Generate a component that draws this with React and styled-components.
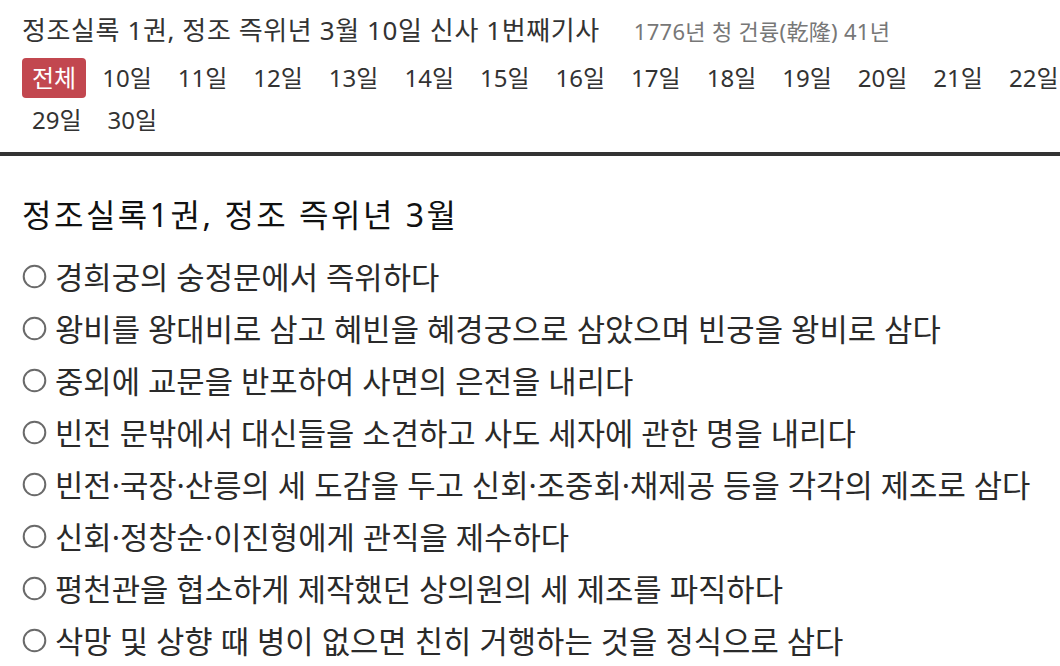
import React from 'react';
import styled, { createGlobalStyle } from 'styled-components';

const GlobalStyle = createGlobalStyle`
  html, body {
    margin: 0;
    padding: 0;
    background: #fff;
    overflow: hidden;
  }
  body {
    font-family: "Noto Sans", "Noto Sans CJK KR", sans-serif;
    color: #333;
  }
`;

const Page = styled.div`
  width: 1600px;
  padding-top: 10px;
`;

const Header = styled.div`
  display: flex;
  align-items: baseline;
  padding: 0 22px;
  height: 40px;
  line-height: 40px;
`;

const Title = styled.h1`
  margin: 0;
  font-size: 26px;
  font-weight: 400;
  letter-spacing: 0.6px;
  color: #333;
`;

const Era = styled.span`
  margin-left: 34px;
  font-size: 22px;
  letter-spacing: 0.3px;
  color: #777;
`;

const DayList = styled.ul`
  list-style: none;
  margin: 8px 0 0;
  padding: 0 22px;
  display: flex;
  flex-wrap: wrap;
  column-gap: 6px;
  row-gap: 2px;
`;

const DayItem = styled.li`
  height: 40px;
  line-height: 40px;
  padding: 0 10px;
  border-radius: 4px;
  font-size: 24px;
  background: ${(p) => (p.$active ? '#c2474f' : 'transparent')};
  color: ${(p) => (p.$active ? '#fff' : '#333')};
`;

const Divider = styled.hr`
  margin: 12px 0 0;
  border: 0;
  height: 4px;
  background: #333;
`;

const Section = styled.section`
  padding: 39px 22px 0;
`;

const SectionTitle = styled.h2`
  margin: 0 0 14px;
  font-size: 32px;
  font-weight: 400;
  letter-spacing: 2.5px;
  line-height: 40px;
  color: #111;
`;

const Articles = styled.ul`
  list-style: none;
  margin: 0;
  padding: 0;
`;

const Article = styled.li`
  display: flex;
  align-items: center;
  height: 52px;
  font-size: 30.8px;
  color: #2a2a2a;
`;

const Bullet = styled.svg`
  flex: none;
  width: 25px;
  height: 25px;
  margin-right: 8px;
  margin-top: 2px;
`;

const days = ['10', '11', '12', '13', '14', '15', '16', '17', '18', '19', '20', '21', '22', '23', '24', '25', '26', '27', '28', '29', '30'];

const articles = [
  '경희궁의 숭정문에서 즉위하다',
  '왕비를 왕대비로 삼고 혜빈을 혜경궁으로 삼았으며 빈궁을 왕비로 삼다',
  '중외에 교문을 반포하여 사면의 은전을 내리다',
  '빈전 문밖에서 대신들을 소견하고 사도 세자에 관한 명을 내리다',
  '빈전·국장·산릉의 세 도감을 두고 신회·조중회·채제공 등을 각각의 제조로 삼다',
  '신회·정창순·이진형에게 관직을 제수하다',
  '평천관을 협소하게 제작했던 상의원의 세 제조를 파직하다',
  '삭망 및 상향 때 병이 없으면 친히 거행하는 것을 정식으로 삼다',
];

function Ring() {
  return (
    <Bullet viewBox="0 0 25 25">
      <circle cx="12.5" cy="12.5" r="10.8" fill="#fff" stroke="#6a6a6a" strokeWidth="2" />
    </Bullet>
  );
}

export default function App() {
  return (
    <Page>
      <GlobalStyle />
      <Header>
        <Title>정조실록 1권, 정조 즉위년 3월 10일 신사 1번째기사</Title>
        <Era>1776년 청 건륭(乾隆) 41년</Era>
      </Header>
      <DayList>
        <DayItem $active>전체</DayItem>
        {days.map((d) => (
          <DayItem key={d}>{d}일</DayItem>
        ))}
      </DayList>
      <Divider />
      <Section>
        <SectionTitle>정조실록1권, 정조 즉위년 3월</SectionTitle>
        <Articles>
          {articles.map((a) => (
            <Article key={a}>
              <Ring />
              {a}
            </Article>
          ))}
        </Articles>
      </Section>
    </Page>
  );
}
